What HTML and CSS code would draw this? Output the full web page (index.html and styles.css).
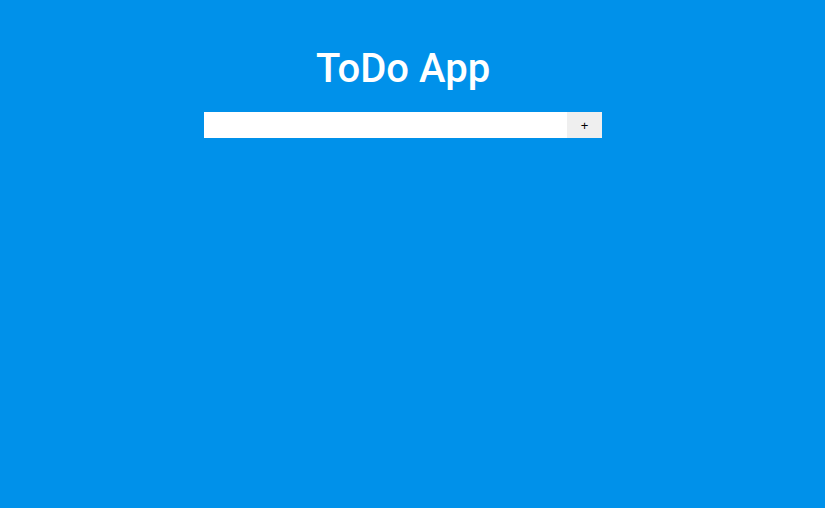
FILE: index.html
```html
<!DOCTYPE html>
<html lang="en">
<head>
<meta charset="utf-8">
<title>ToDo App</title>
<link rel="stylesheet" href="styles.css">
</head>
<body>
<div class="app">
  <h1 class="title">ToDo App</h1>
  <form class="todo-form">
    <input class="todo-input" type="text">
    <button class="todo-add" type="button">+</button>
  </form>
</div>
</body>
</html>
```
FILE: styles.css
```css
html, body {
  margin: 0;
  padding: 0;
  height: 100%;
}
body {
  background: #0091ea;
  font-family: Roboto, "Liberation Sans", sans-serif;
}
.app {
  width: 806px;
  display: flex;
  flex-direction: column;
  align-items: center;
  padding-top: 44px;
}
.title {
  margin: 0;
  color: #fff;
  font-size: 40px;
  font-weight: 500;
  line-height: 50px;
}
.todo-form {
  display: flex;
  margin-top: 18px;
}
.todo-input {
  width: 363px;
  height: 26px;
  border: none;
  margin: 0;
  padding: 0 6px;
  box-sizing: border-box;
  background: #fff;
  outline: none;
}
.todo-add {
  width: 35px;
  height: 26px;
  border: none;
  margin: 0;
  padding: 0;
  background: #efefef;
  color: #000;
  font-family: Arial, "Liberation Sans", sans-serif;
  font-size: 13px;
}
```
